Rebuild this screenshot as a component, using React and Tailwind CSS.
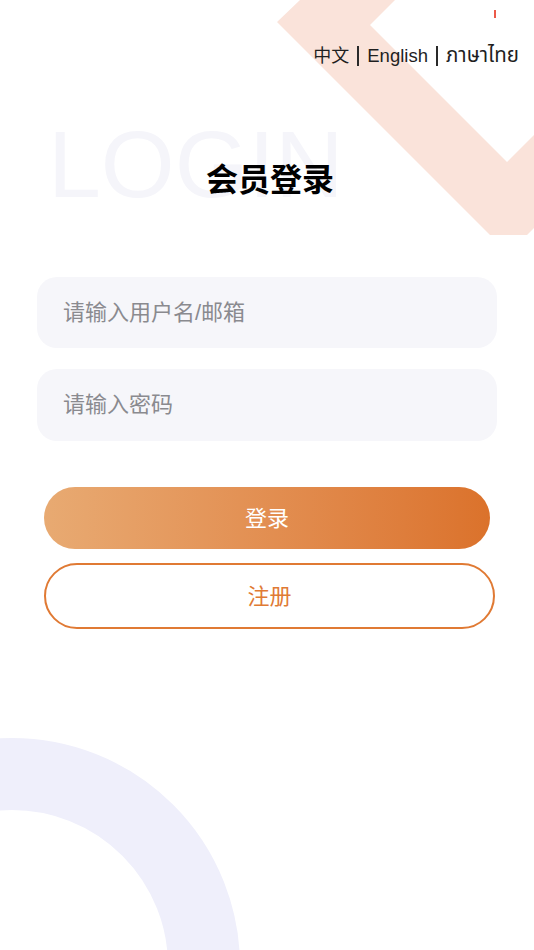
import React from 'react';

const font = { fontFamily: '"Liberation Sans", "Noto Sans CJK SC", "Noto Sans", sans-serif' };

function Chevron() {
  return (
    <svg className="absolute top-0 left-0 pointer-events-none" width="534" height="240" viewBox="0 0 534 240">
      <polygon
        points="300,0 277,22 490,235 527,235 534,228 534,135 507,162 370,25 395,0"
        fill="#fae3da"
      />
      <rect x="494" y="10" width="2" height="8" fill="#ec5a4a" />
    </svg>
  );
}

function Ring() {
  return (
    <svg className="absolute left-0 bottom-0 pointer-events-none" width="260" height="230" viewBox="0 720 260 230">
      <circle cx="12" cy="966" r="192" fill="none" stroke="#efeffb" strokeWidth="72" />
    </svg>
  );
}

export default function App() {
  return (
    <div className="relative w-[534px] h-[950px] overflow-hidden bg-white" style={font}>
      <Chevron />
      <Ring />

      <div className="relative z-10 flex flex-col">
        {/* Language switch */}
        <div className="flex items-center justify-end gap-[8px] pt-[44px] pr-[15px] h-[68px] text-[18px] leading-[24px] text-[#1f1f1f]">
          <span>中文</span>
          <span className="w-[2px] h-[20px] bg-[#2a2a2a]" />
          <span className="text-[18.5px]">English</span>
          <span className="w-[2px] h-[20px] bg-[#2a2a2a]" />
          <span
            className="text-[20.5px]"
            style={{ fontFamily: '"Noto Sans Thai", "Noto Sans", "DejaVu Sans", sans-serif' }}
          >
            ภาษาไทย
          </span>
        </div>

        {/* Title */}
        <div className="relative mt-[92px] h-[40px]">
          <span className="absolute left-[48px] -top-[43px] text-[95px] leading-none text-[#f5f5fa] select-none">
            LOGIN
          </span>
          <h1 className="relative text-center pl-[6px] text-[32px] leading-[40px] font-bold text-black">
            会员登录
          </h1>
        </div>

        {/* Inputs */}
        <div className="mx-[37px] mt-[77px] flex flex-col gap-[21px]">
          <input
            className="h-[71px] w-full rounded-[20px] bg-[#f6f6fa] pl-[26px] text-[22px] text-[#333] outline-none placeholder:text-[#8a8a8f]"
            placeholder="请输入用户名/邮箱"
          />
          <input
            type="password"
            className="h-[72px] w-full rounded-[20px] bg-[#f6f6fa] pl-[26px] text-[22px] text-[#333] outline-none placeholder:text-[#8a8a8f]"
            placeholder="请输入密码"
          />
        </div>

        {/* Buttons */}
        <button className="mx-[44px] mt-[46px] h-[62px] rounded-full bg-linear-to-r from-[#e8aa72] to-[#db722b] text-[22px] text-white">
          登录
        </button>
        <button className="ml-[44px] mr-[39px] mt-[14px] h-[66px] rounded-full border-[2.5px] border-[#e07a34] bg-white text-[22px] text-[#e07a34]">
          注册
        </button>
      </div>
    </div>
  );
}
